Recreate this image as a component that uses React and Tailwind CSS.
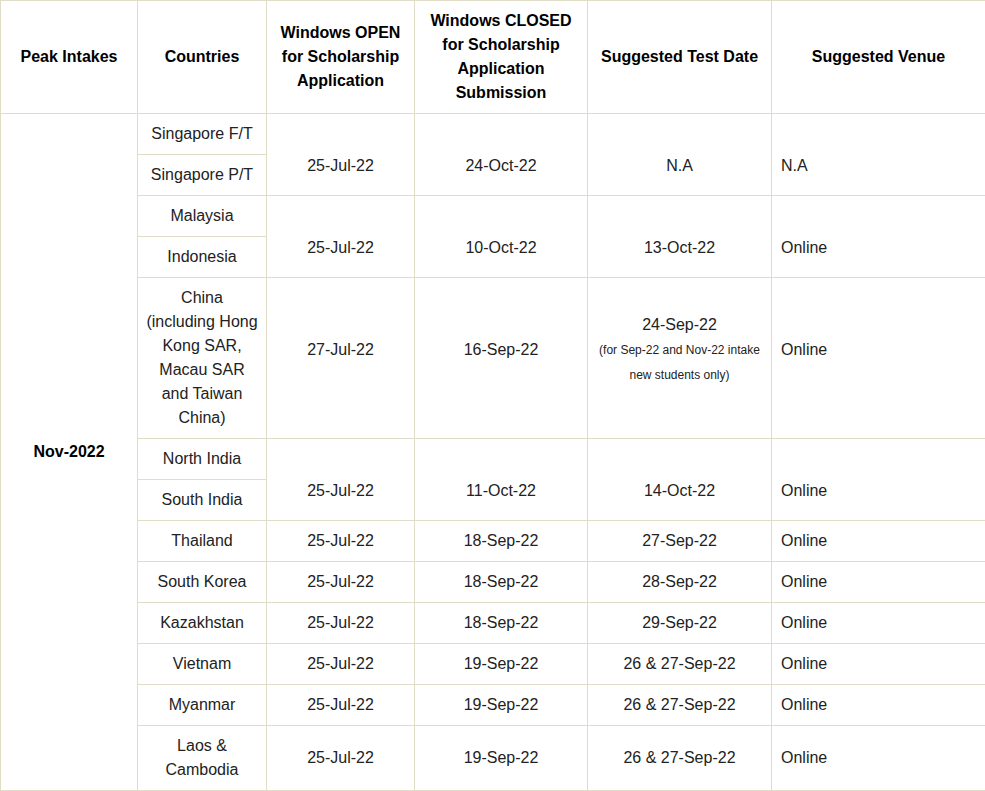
import React from 'react'

const rows = [
  { country: 'Singapore F/T', open: '25-Jul-22', closed: '24-Oct-22', test: 'N.A', venue: 'N.A', span: 2 },
  { country: 'Singapore P/T' },
  { country: 'Malaysia', open: '25-Jul-22', closed: '10-Oct-22', test: '13-Oct-22', venue: 'Online', span: 2 },
  { country: 'Indonesia' },
  { country: 'China (including Hong Kong SAR, Macau SAR and Taiwan China)', open: '27-Jul-22', closed: '16-Sep-22', test: '24-Sep-22', note: true, venue: 'Online', span: 1 },
  { country: 'North India', open: '25-Jul-22', closed: '11-Oct-22', test: '14-Oct-22', venue: 'Online', span: 2 },
  { country: 'South India' },
  { country: 'Thailand', open: '25-Jul-22', closed: '18-Sep-22', test: '27-Sep-22', venue: 'Online', span: 1 },
  { country: 'South Korea', open: '25-Jul-22', closed: '18-Sep-22', test: '28-Sep-22', venue: 'Online', span: 1 },
  { country: 'Kazakhstan', open: '25-Jul-22', closed: '18-Sep-22', test: '29-Sep-22', venue: 'Online', span: 1 },
  { country: 'Vietnam', open: '25-Jul-22', closed: '19-Sep-22', test: '26 & 27-Sep-22', venue: 'Online', span: 1 },
  { country: 'Myanmar', open: '25-Jul-22', closed: '19-Sep-22', test: '26 & 27-Sep-22', venue: 'Online', span: 1 },
  { country: 'Laos & Cambodia', open: '25-Jul-22', closed: '19-Sep-22', test: '26 & 27-Sep-22', venue: 'Online', span: 1 },
]

const cell = 'border border-[#dfddc8] px-2 align-middle'

// the source page nudges merged cells off-centre; mimic it
const padFor = (r) => {
  if (r.span === 2) return 'pt-[30px] pb-2'
  if (r.note) return 'pt-2 pb-6'
  return 'py-2'
}

const App = () => {
  return (
    <div className="bg-white w-[985px] font-['Liberation_Sans',Arial,sans-serif] text-[16px] leading-6 text-[#222]">
      <table className="table-fixed border-collapse w-[985px]">
        <colgroup>
          <col className="w-[137px]" />
          <col className="w-[129px]" />
          <col className="w-[148px]" />
          <col className="w-[173px]" />
          <col className="w-[184px]" />
          <col className="w-[214px]" />
        </colgroup>
        <thead>
          <tr>
            <th className={`${cell} py-2 font-bold text-center text-black`}>Peak Intakes</th>
            <th className={`${cell} py-2 font-bold text-center text-black`}>Countries</th>
            <th className={`${cell} py-2 font-bold text-center text-black`}>Windows OPEN for Scholarship Application</th>
            <th className={`${cell} py-2 font-bold text-center text-black`}>Windows CLOSED for Scholarship Application Submission</th>
            <th className={`${cell} py-2 font-bold text-center text-black`}>Suggested Test Date</th>
            <th className={`${cell} py-2 font-bold text-center text-black`}>Suggested Venue</th>
          </tr>
        </thead>
        <tbody>
          {rows.map((r, i) => (
            <tr key={r.country}>
              {i === 0 && (
                <td rowSpan={rows.length} className={`${cell} py-2 text-center font-bold text-black`}>
                  Nov-2022
                </td>
              )}
              <td className={`${cell} py-2 text-center`}>{r.country}</td>
              {r.span && (
                <>
                  <td rowSpan={r.span} className={`${cell} ${padFor(r)} text-center`}>{r.open}</td>
                  <td rowSpan={r.span} className={`${cell} ${padFor(r)} text-center`}>{r.closed}</td>
                  <td rowSpan={r.span} className={`${cell} ${r.note ? 'py-2' : padFor(r)} text-center`}>
                    {r.note ? (
                      <div className="pb-4">
                        {r.test}
                        <br />
                        <span className="text-[12px]">
                          (for Sep-22 and Nov-22 intake
                          <br />
                          new students only)
                        </span>
                      </div>
                    ) : (
                      r.test
                    )}
                  </td>
                  <td rowSpan={r.span} className={`${cell} ${padFor(r)} text-left pl-[9px]`}>{r.venue}</td>
                </>
              )}
            </tr>
          ))}
        </tbody>
      </table>
    </div>
  )
}

export default App
